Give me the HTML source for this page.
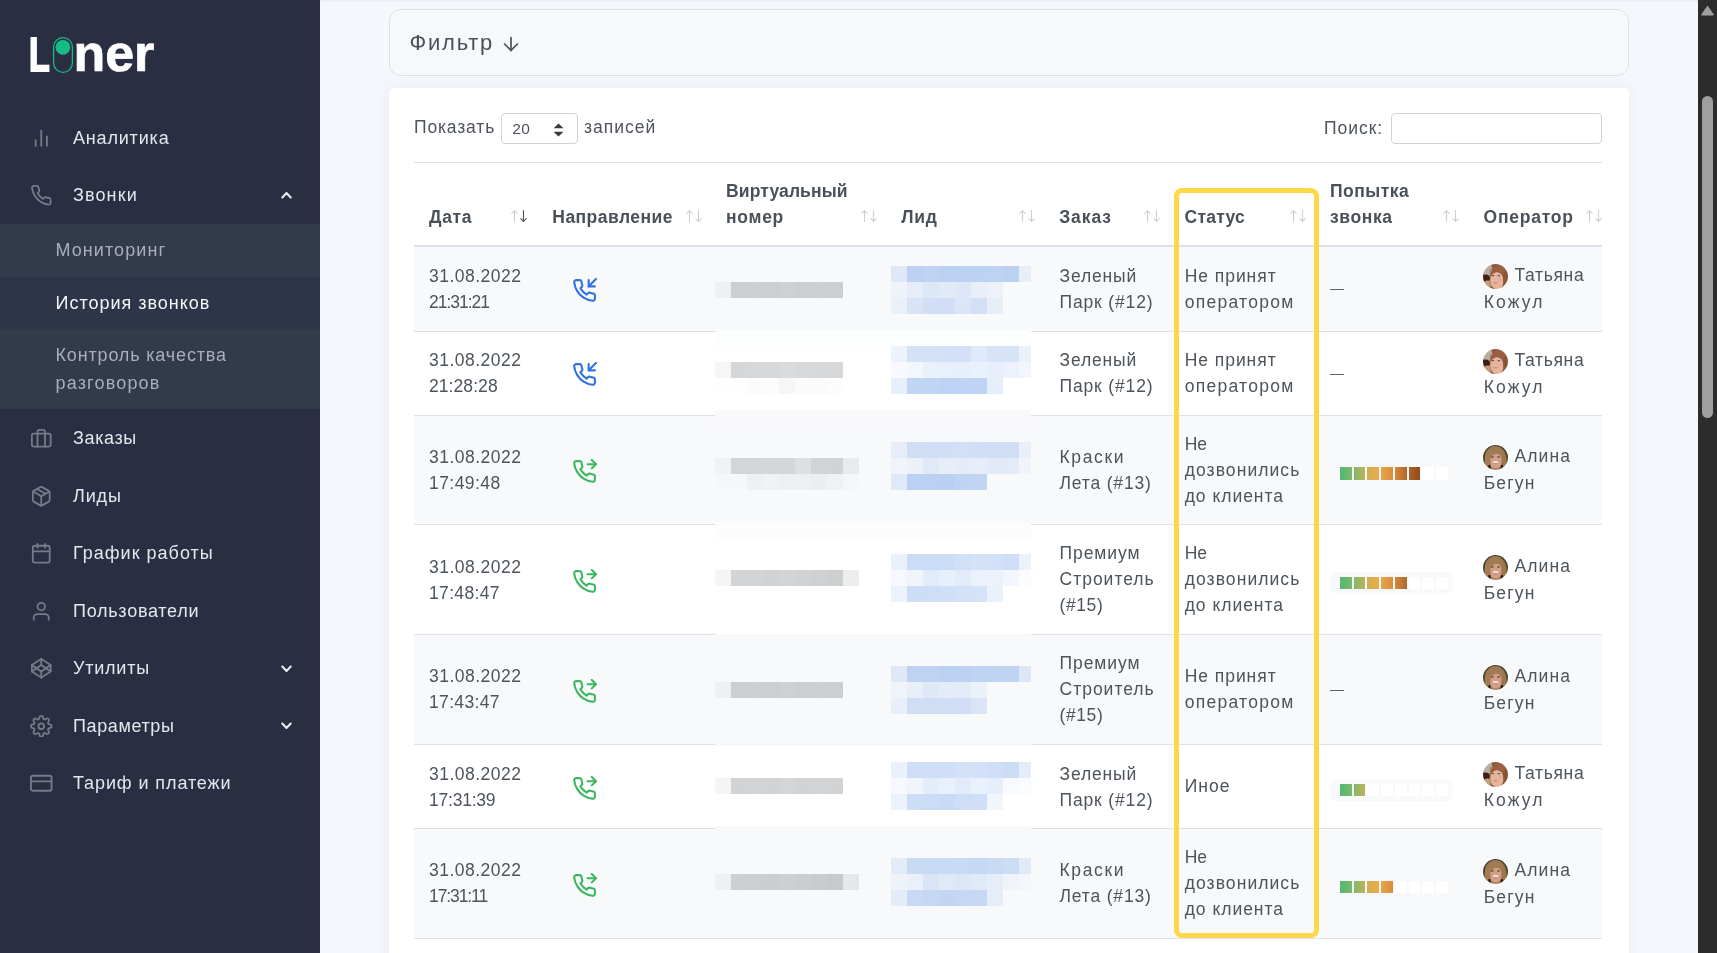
<!DOCTYPE html>
<html lang="ru">
<head>
<meta charset="utf-8">
<title>Liner — История звонков</title>
<style>
*{box-sizing:border-box}
html,body{margin:0;padding:0}
body{width:1717px;height:953px;overflow:hidden;position:relative;background:#f4f7fb;font-family:"Liberation Sans",sans-serif;font-size:17.5px;line-height:26px;color:#4d545b}
.abs{position:absolute}
#sb,#tb,#filter,.ctl,.inp{will-change:transform}
svg.fi{fill:none;stroke:currentColor;stroke-width:2;stroke-linecap:round;stroke-linejoin:round}
/* sidebar */
#sb{position:absolute;left:0;top:0;width:320px;height:953px;background:#2a2e42;color:#e4e7ec}
#sb .it{position:absolute;left:0;width:320px;height:57.5px;font-size:18px;line-height:27px}
#sb .it .tx{position:absolute;left:73px;top:14.8px;white-space:nowrap}
#sb .it svg.fi{position:absolute;left:30px;top:16.8px;width:22.5px;height:22.5px;color:#767b8a;stroke-width:1.9}
#sb .it svg.ch{position:absolute;left:281px;top:24.4px;width:11px;height:8px;fill:none;stroke:#e9ecef;stroke-width:2.1;stroke-linecap:round;stroke-linejoin:round}
#sub{position:absolute;left:0;top:224px;width:320px;height:184.5px;background:#323a4c}
#sub .si{position:absolute;left:0;width:320px;font-size:18px;line-height:27.4px;color:#a9aebb;white-space:nowrap}
#sub .si span.l{position:absolute;left:55.5px}
#sub .act{background:#2e3548;color:#f4f6f8}
/* logo */
#logo{position:absolute;left:0;top:0;width:320px;height:100px;color:#fff;font-weight:bold}
/* main */
#filter{position:absolute;left:389px;top:9px;width:1240px;height:67px;border:1px solid #dde1e7;border-radius:12px;background:#f6f8fb}
#filter .tx{position:absolute;left:19.5px;top:18.8px;font-size:22px;line-height:28px;white-space:nowrap;color:#495057}
#card{position:absolute;left:389px;top:88px;width:1240px;height:900px;background:#fff;border-radius:5px;box-shadow:0 0 16px 0 rgba(33,37,41,.05)}
.ctl{position:absolute;white-space:nowrap;line-height:26px}
.inp{position:absolute;border:1px solid #ced4da;border-radius:4px;background:#fff}
/* table (coordinates are page-absolute inside #tb) */
#tb{position:absolute;left:0;top:0;width:1717px;height:953px;pointer-events:none}
.hl{position:absolute;left:414px;width:1188px;background:#dee2e6}
.row{position:absolute;left:414px;width:1188px}
.row.odd{background:#f8f9fb}
.th{position:absolute;font-weight:bold;white-space:nowrap;line-height:26px;color:#495057}
.sa{position:absolute;top:209px;width:16px;height:14px}
.sa path{fill:none;stroke:#495057;stroke-width:1.1;stroke-linecap:round;stroke-linejoin:round}
.sa .off{opacity:.28}
.c{position:absolute;top:var(--dy,0px);bottom:calc(1px - var(--dy,0px));display:flex;flex-direction:column;justify-content:center;white-space:nowrap;line-height:26px}
.c div{height:26px}
.av{display:inline-block;width:25px;height:25px;border-radius:50%;vertical-align:middle;margin-right:6.6px;overflow:hidden;position:relative;top:.4px;box-shadow:0 0 0 1px #fff}
.av svg{display:block;width:25px;height:25px}
.ph{position:absolute;left:158px;width:25px;height:25px}
.ph.in{color:#2f72e2}
.ph.out{color:#3cb75f}
.dash{position:absolute;left:916px;width:14px;height:1.3px;background:#5b6268}
.bar{position:absolute;left:915.5px;width:123px;height:21.5px;border-radius:7px;background:#f8f9fa}
.bar i{position:absolute;top:4.3px;width:11.8px;height:12.7px;background:#fff}
.bar i.on{background-image:linear-gradient(90deg,#52b871 0px,#7cba6a 13px,#c9b056 26px,#eeaa4b 38px,#d68c3a 54px,#b0632a 68px,#8b4513 82px,#7a3a10 110px);background-size:110px 13px;background-repeat:no-repeat}
#hlbox{position:absolute;left:1174px;top:187.5px;width:145px;height:750px;border:5px solid #ffd84a;border-radius:8px}
#scr{position:absolute;left:1698px;top:0;width:19px;height:953px;background:#2c2c2c}
#scr .th2{position:absolute;left:4px;top:96px;width:11px;height:322px;border-radius:6px;background:#9f9f9f}
#scr svg{position:absolute;left:3px;top:5px;width:13px;height:11px}
#px{position:absolute;left:715px;top:250px;width:316px;height:688px}
</style>
</head>
<body>
<div id="sb">
 <div id="logo">
  <span class="abs" style="left:28.5px;top:26.8px;font-size:48.4px;line-height:54px;transform:scaleX(.7);transform-origin:0 0;-webkit-text-stroke:2px #fff">L</span>
  <svg class="abs" style="left:52px;top:35.5px" width="22" height="38" viewBox="0 0 22 38"><rect x="1.6" y="1.6" width="18.8" height="34.8" rx="9.4" fill="none" stroke="#17b986" stroke-width="1.3"/><circle cx="10.9" cy="11.3" r="7.4" fill="#14bd87"/></svg>
  <span class="abs" style="left:73.6px;top:22.5px;font-size:52px;line-height:60px;letter-spacing:-.2px;-webkit-text-stroke:.7px #fff">ner</span>
 </div>
 <div class="it" style="top:110.2px"><svg class="fi" viewBox="0 0 24 24"><line x1="18" y1="20" x2="18" y2="10"/><line x1="12" y1="20" x2="12" y2="4"/><line x1="6" y1="20" x2="6" y2="14"/></svg><span class="tx"><span style="letter-spacing:0.82px">Аналитика</span></span></div>
 <div class="it" style="top:167.1px"><svg class="fi" viewBox="0 0 24 24"><path d="M22 16.92v3a2 2 0 0 1-2.18 2 19.79 19.79 0 0 1-8.63-3.07 19.5 19.5 0 0 1-6-6 19.79 19.79 0 0 1-3.07-8.67A2 2 0 0 1 4.11 2h3a2 2 0 0 1 2 1.72 12.84 12.84 0 0 0 .7 2.81 2 2 0 0 1-.45 2.11L8.09 9.91a16 16 0 0 0 6 6l1.27-1.27a2 2 0 0 1 2.11-.45 12.84 12.84 0 0 0 2.81.7A2 2 0 0 1 22 16.92z"/></svg><span class="tx"><span style="letter-spacing:1.12px">Звонки</span></span><svg class="ch" viewBox="0 0 11 8"><polyline points="1.3,6.4 5.5,2.1 9.7,6.4"/></svg></div>
 <div id="sub">
  <div class="si" style="top:0;height:52.5px"><span class="l" style="top:12.5px"><span style="letter-spacing:1.07px">Мониторинг</span></span></div>
  <div class="si act" style="top:52.5px;height:52.5px"><span class="l" style="top:13px"><span style="letter-spacing:0.98px">История звонков</span></span></div>
  <div class="si" style="top:105px;height:79.5px"><span class="l" style="top:12.6px"><span style="letter-spacing:0.84px">Контроль качества</span></span><span class="l" style="top:41px"><span style="letter-spacing:1.18px">разговоров</span></span></div>
 </div>
 <div class="it" style="top:410.4px"><svg class="fi" viewBox="0 0 24 24"><rect x="2" y="7" width="20" height="14" rx="2" ry="2"/><path d="M16 21V5a2 2 0 0 0-2-2h-4a2 2 0 0 0-2 2v16"/></svg><span class="tx"><span style="letter-spacing:0.63px">Заказы</span></span></div>
 <div class="it" style="top:467.9px"><svg class="fi" viewBox="0 0 24 24"><line x1="16.5" y1="9.4" x2="7.5" y2="4.21"/><path d="M21 16V8a2 2 0 0 0-1-1.73l-7-4a2 2 0 0 0-2 0l-7 4A2 2 0 0 0 3 8v8a2 2 0 0 0 1 1.73l7 4a2 2 0 0 0 2 0l7-4A2 2 0 0 0 21 16z"/><polyline points="3.27 6.96 12 12.01 20.73 6.96"/><line x1="12" y1="22.08" x2="12" y2="12"/></svg><span class="tx"><span style="letter-spacing:0.86px">Лиды</span></span></div>
 <div class="it" style="top:525.4px"><svg class="fi" viewBox="0 0 24 24"><rect x="3" y="4" width="18" height="18" rx="2" ry="2"/><line x1="16" y1="2" x2="16" y2="6"/><line x1="8" y1="2" x2="8" y2="6"/><line x1="3" y1="10" x2="21" y2="10"/></svg><span class="tx"><span style="letter-spacing:1.01px">График работы</span></span></div>
 <div class="it" style="top:582.9px"><svg class="fi" viewBox="0 0 24 24"><path d="M20 21v-2a4 4 0 0 0-4-4H8a4 4 0 0 0-4 4v2"/><circle cx="12" cy="7" r="4"/></svg><span class="tx"><span style="letter-spacing:0.73px">Пользователи</span></span></div>
 <div class="it" style="top:640.4px"><svg class="fi" viewBox="0 0 24 24"><polygon points="12 2 22 8.5 22 15.5 12 22 2 15.5 2 8.5 12 2"/><line x1="12" y1="22" x2="12" y2="15.5"/><polyline points="22 8.5 12 15.5 2 8.5"/><polyline points="2 15.5 12 8.5 22 15.5"/><line x1="12" y1="2" x2="12" y2="8.5"/></svg><span class="tx"><span style="letter-spacing:0.77px">Утилиты</span></span><svg class="ch" viewBox="0 0 11 8"><polyline points="1.3,1.6 5.5,5.9 9.7,1.6"/></svg></div>
 <div class="it" style="top:697.9px"><svg class="fi" viewBox="0 0 24 24"><circle cx="12" cy="12" r="3"/><path d="M19.4 15a1.65 1.65 0 0 0 .33 1.82l.06.06a2 2 0 0 1 0 2.83 2 2 0 0 1-2.83 0l-.06-.06a1.65 1.65 0 0 0-1.82-.33 1.65 1.65 0 0 0-1 1.51V21a2 2 0 0 1-2 2 2 2 0 0 1-2-2v-.09A1.65 1.65 0 0 0 9 19.4a1.65 1.65 0 0 0-1.82.33l-.06.06a2 2 0 0 1-2.83 0 2 2 0 0 1 0-2.83l.06-.06a1.65 1.65 0 0 0 .33-1.82 1.65 1.65 0 0 0-1.51-1H3a2 2 0 0 1-2-2 2 2 0 0 1 2-2h.09A1.65 1.65 0 0 0 4.6 9a1.65 1.65 0 0 0-.33-1.82l-.06-.06a2 2 0 0 1 0-2.83 2 2 0 0 1 2.83 0l.06.06a1.65 1.65 0 0 0 1.82.33H9a1.65 1.65 0 0 0 1-1.51V3a2 2 0 0 1 2-2 2 2 0 0 1 2 2v.09a1.65 1.65 0 0 0 1 1.51 1.65 1.65 0 0 0 1.82-.33l.06-.06a2 2 0 0 1 2.83 0 2 2 0 0 1 0 2.83l-.06.06a1.65 1.65 0 0 0-.33 1.82V9a1.65 1.65 0 0 0 1.51 1H21a2 2 0 0 1 2 2 2 2 0 0 1-2 2h-.09a1.65 1.65 0 0 0-1.51 1z"/></svg><span class="tx"><span style="letter-spacing:0.61px">Параметры</span></span><svg class="ch" viewBox="0 0 11 8"><polyline points="1.3,1.6 5.5,5.9 9.7,1.6"/></svg></div>
 <div class="it" style="top:755.4px"><svg class="fi" viewBox="0 0 24 24"><rect x="1" y="4" width="22" height="16" rx="2" ry="2"/><line x1="1" y1="10" x2="23" y2="10"/></svg><span class="tx"><span style="letter-spacing:0.9px">Тариф и платежи</span></span></div>
</div>
<svg width="0" height="0" style="position:absolute"><defs><filter id="avb" x="-10%" y="-10%" width="120%" height="120%"><feGaussianBlur stdDeviation=".55"/></filter></defs></svg>
<div class="abs" style="left:320px;top:0;width:1378px;height:3px;background:linear-gradient(#e6e9ee,#f5f7fb)"></div>
<div id="filter"><span class="tx"><span style="letter-spacing:1.76px">Фильтр</span></span><svg class="fi abs" style="left:110px;top:23px;width:22px;height:22px;stroke-width:1.9" viewBox="0 0 24 24"><line x1="12" y1="5" x2="12" y2="19"/><polyline points="19 12 12 19 5 12"/></svg></div>
<div id="card"></div>
<div class="ctl" style="left:414.4px;top:113.8px"><span style="letter-spacing:0.84px">Показать</span></div>
<div class="inp" style="left:501px;top:113px;width:77px;height:30.5px"><span class="abs" style="left:10.2px;top:2.6px;font-size:15.5px;line-height:24px;letter-spacing:.5px">20</span><svg class="abs" style="left:50.7px;top:9.2px" width="11" height="14" viewBox="0 0 11 14"><path d="M.6 5.2 5.5.4l4.9 4.8zM.6 8.8l4.9 4.8 4.9-4.8z" fill="#343a40"/></svg></div>
<div class="ctl" style="left:583.5px;top:113.8px"><span style="letter-spacing:1.0px">записей</span></div>
<div class="ctl" style="left:1324px;top:114.5px"><span style="letter-spacing:0.95px">Поиск:</span></div>
<div class="inp" style="left:1391px;top:113px;width:211px;height:30.5px"></div>
<div id="tb">
<div class="hl" style="top:162px;height:1px"></div>
<div class="th" style="left:429px;top:203.8px"><div><span style="letter-spacing:0.66px">Дата</span></div></div>
<div class="th" style="left:552.3px;top:203.8px"><div><span style="letter-spacing:0.45px">Направление</span></div></div>
<div class="th" style="left:726px;top:177.8px"><div><span style="letter-spacing:0.13px">Виртуальный</span></div><div><span style="letter-spacing:0.72px">номер</span></div></div>
<div class="th" style="left:901.3px;top:203.8px"><div><span style="letter-spacing:0.67px">Лид</span></div></div>
<div class="th" style="left:1059.2px;top:203.8px"><div><span style="letter-spacing:0.92px">Заказ</span></div></div>
<div class="th" style="left:1184.6px;top:203.8px"><div><span style="letter-spacing:0.22px">Статус</span></div></div>
<div class="th" style="left:1330px;top:177.8px"><div><span style="letter-spacing:0.49px">Попытка</span></div><div><span style="letter-spacing:0.6px">звонка</span></div></div>
<div class="th" style="left:1483.5px;top:203.8px"><div><span style="letter-spacing:0.78px">Оператор</span></div></div>
<svg class="sa" style="left:511px" viewBox="0 0 16 14"><path class="off" d="M3.5 12.5V1.5M.8 4.4 3.5 1.5 6.2 4.4"/><path d="M12.5 1.5V12.5M9.8 9.6 12.5 12.5 15.2 9.6"/></svg>
<svg class="sa" style="left:686px" viewBox="0 0 16 14"><path class="off" d="M3.5 12.5V1.5M.8 4.4 3.5 1.5 6.2 4.4"/><path class="off" d="M12.5 1.5V12.5M9.8 9.6 12.5 12.5 15.2 9.6"/></svg>
<svg class="sa" style="left:861px" viewBox="0 0 16 14"><path class="off" d="M3.5 12.5V1.5M.8 4.4 3.5 1.5 6.2 4.4"/><path class="off" d="M12.5 1.5V12.5M9.8 9.6 12.5 12.5 15.2 9.6"/></svg>
<svg class="sa" style="left:1019px" viewBox="0 0 16 14"><path class="off" d="M3.5 12.5V1.5M.8 4.4 3.5 1.5 6.2 4.4"/><path class="off" d="M12.5 1.5V12.5M9.8 9.6 12.5 12.5 15.2 9.6"/></svg>
<svg class="sa" style="left:1144px" viewBox="0 0 16 14"><path class="off" d="M3.5 12.5V1.5M.8 4.4 3.5 1.5 6.2 4.4"/><path class="off" d="M12.5 1.5V12.5M9.8 9.6 12.5 12.5 15.2 9.6"/></svg>
<svg class="sa" style="left:1290px" viewBox="0 0 16 14"><path class="off" d="M3.5 12.5V1.5M.8 4.4 3.5 1.5 6.2 4.4"/><path class="off" d="M12.5 1.5V12.5M9.8 9.6 12.5 12.5 15.2 9.6"/></svg>
<svg class="sa" style="left:1443px" viewBox="0 0 16 14"><path class="off" d="M3.5 12.5V1.5M.8 4.4 3.5 1.5 6.2 4.4"/><path class="off" d="M12.5 1.5V12.5M9.8 9.6 12.5 12.5 15.2 9.6"/></svg>
<svg class="sa" style="left:1586px" viewBox="0 0 16 14"><path class="off" d="M3.5 12.5V1.5M.8 4.4 3.5 1.5 6.2 4.4"/><path class="off" d="M12.5 1.5V12.5M9.8 9.6 12.5 12.5 15.2 9.6"/></svg>
<div class="hl" style="top:245px;height:2px;background:#dcdfe5"></div>
<div class="row odd" style="top:247px;height:85px;border-bottom:1px solid #dee2e6;--dy:0px">
<div class="c" style="left:15px;--dy:0px"><div><span style="letter-spacing:0.49px">31.08.2022</span></div><div><span style="letter-spacing:-1.02px">21:31:21</span></div></div>
<svg class="fi ph in" style="top:30.8px" viewBox="0 0 24 24"><polyline points="16 2 16 8 22 8"/><line x1="23" y1="1" x2="16" y2="8"/><path d="M22 16.92v3a2 2 0 0 1-2.18 2 19.79 19.79 0 0 1-8.63-3.07 19.5 19.5 0 0 1-6-6 19.79 19.79 0 0 1-3.07-8.67A2 2 0 0 1 4.11 2h3a2 2 0 0 1 2 1.72 12.84 12.84 0 0 0 .7 2.81 2 2 0 0 1-.45 2.11L8.09 9.91a16 16 0 0 0 6 6l1.27-1.27a2 2 0 0 1 2.11-.45 12.84 12.84 0 0 0 2.81.7A2 2 0 0 1 22 16.92z"/></svg>
<div class="c" style="left:645.5px"><div><span style="letter-spacing:0.84px">Зеленый</span></div><div><span style="letter-spacing:0.85px">Парк (#12)</span></div></div>
<div class="c" style="left:770.7px;--dy:0px"><div><span style="letter-spacing:0.95px">Не принят</span></div><div><span style="letter-spacing:1.27px">оператором</span></div></div>
<div class="dash" style="top:42.2px"></div>
<div class="c" style="left:1068.8px;--dy:0px"><div style="height:27px"><span class="av"><svg viewBox="0 0 25 25"><g filter="url(#avb)"><rect x="-3" y="-3" width="31" height="31" fill="#8c5838"/><ellipse cx="4.5" cy="6" rx="5" ry="7.5" fill="#b9aea4"/><ellipse cx="2.5" cy="14" rx="4.5" ry="3.6" fill="#3f1f17"/><ellipse cx="4.5" cy="20.5" rx="4.5" ry="4" fill="#c2a07c"/><rect x="6.8" y="5" width="1.6" height="18" fill="#a68462"/><ellipse cx="14" cy="16.6" rx="6.6" ry="8.6" fill="#e6b49c"/><path d="M7 13C7.5 4 14 -.5 19.5 1.5 25 4 26.5 12 24.5 19 23 13 20 9.5 15.5 8.2 11 7.5 9 9.5 7 13z" fill="#98603f"/><ellipse cx="22.8" cy="15" rx="2.6" ry="8" fill="#8a5434"/><ellipse cx="10" cy="11.6" rx="1.4" ry=".65" fill="#5b4648"/><ellipse cx="15.8" cy="11.7" rx="1.4" ry=".65" fill="#56505f"/><ellipse cx="12.4" cy="18.7" rx="2.3" ry=".8" fill="#d98585"/><ellipse cx="17.5" cy="15.5" rx="2" ry="1.6" fill="#e9a99a"/></g></svg></span><span style="letter-spacing:0.66px">Татьяна</span></div><div style="padding-left:.9px"><span style="letter-spacing:2.12px">Кожул</span></div></div>
</div>
<div class="row" style="top:332px;height:84px;border-bottom:1px solid #dee2e6;--dy:0px">
<div class="c" style="left:15px;--dy:0px"><div><span style="letter-spacing:0.49px">31.08.2022</span></div><div><span style="letter-spacing:0.07px">21:28:28</span></div></div>
<svg class="fi ph in" style="top:30.3px" viewBox="0 0 24 24"><polyline points="16 2 16 8 22 8"/><line x1="23" y1="1" x2="16" y2="8"/><path d="M22 16.92v3a2 2 0 0 1-2.18 2 19.79 19.79 0 0 1-8.63-3.07 19.5 19.5 0 0 1-6-6 19.79 19.79 0 0 1-3.07-8.67A2 2 0 0 1 4.11 2h3a2 2 0 0 1 2 1.72 12.84 12.84 0 0 0 .7 2.81 2 2 0 0 1-.45 2.11L8.09 9.91a16 16 0 0 0 6 6l1.27-1.27a2 2 0 0 1 2.11-.45 12.84 12.84 0 0 0 2.81.7A2 2 0 0 1 22 16.92z"/></svg>
<div class="c" style="left:645.5px"><div><span style="letter-spacing:0.84px">Зеленый</span></div><div><span style="letter-spacing:0.85px">Парк (#12)</span></div></div>
<div class="c" style="left:770.7px;--dy:0px"><div><span style="letter-spacing:0.95px">Не принят</span></div><div><span style="letter-spacing:1.27px">оператором</span></div></div>
<div class="dash" style="top:41.7px"></div>
<div class="c" style="left:1068.8px;--dy:0px"><div style="height:27px"><span class="av"><svg viewBox="0 0 25 25"><g filter="url(#avb)"><rect x="-3" y="-3" width="31" height="31" fill="#8c5838"/><ellipse cx="4.5" cy="6" rx="5" ry="7.5" fill="#b9aea4"/><ellipse cx="2.5" cy="14" rx="4.5" ry="3.6" fill="#3f1f17"/><ellipse cx="4.5" cy="20.5" rx="4.5" ry="4" fill="#c2a07c"/><rect x="6.8" y="5" width="1.6" height="18" fill="#a68462"/><ellipse cx="14" cy="16.6" rx="6.6" ry="8.6" fill="#e6b49c"/><path d="M7 13C7.5 4 14 -.5 19.5 1.5 25 4 26.5 12 24.5 19 23 13 20 9.5 15.5 8.2 11 7.5 9 9.5 7 13z" fill="#98603f"/><ellipse cx="22.8" cy="15" rx="2.6" ry="8" fill="#8a5434"/><ellipse cx="10" cy="11.6" rx="1.4" ry=".65" fill="#5b4648"/><ellipse cx="15.8" cy="11.7" rx="1.4" ry=".65" fill="#56505f"/><ellipse cx="12.4" cy="18.7" rx="2.3" ry=".8" fill="#d98585"/><ellipse cx="17.5" cy="15.5" rx="2" ry="1.6" fill="#e9a99a"/></g></svg></span><span style="letter-spacing:0.66px">Татьяна</span></div><div style="padding-left:.9px"><span style="letter-spacing:2.12px">Кожул</span></div></div>
</div>
<div class="row odd" style="top:416px;height:109px;border-bottom:1px solid #dee2e6;--dy:0px">
<div class="c" style="left:15px;--dy:0px"><div><span style="letter-spacing:0.49px">31.08.2022</span></div><div><span style="letter-spacing:0.44px">17:49:48</span></div></div>
<svg class="fi ph out" style="top:42.8px" viewBox="0 0 24 24"><polyline points="19 1 23 5 19 9"/><line x1="15" y1="5" x2="23" y2="5"/><path d="M22 16.92v3a2 2 0 0 1-2.18 2 19.79 19.79 0 0 1-8.63-3.07 19.5 19.5 0 0 1-6-6 19.79 19.79 0 0 1-3.07-8.67A2 2 0 0 1 4.11 2h3a2 2 0 0 1 2 1.72 12.84 12.84 0 0 0 .7 2.81 2 2 0 0 1-.45 2.11L8.09 9.91a16 16 0 0 0 6 6l1.27-1.27a2 2 0 0 1 2.11-.45 12.84 12.84 0 0 0 2.81.7A2 2 0 0 1 22 16.92z"/></svg>
<div class="c" style="left:645.5px"><div><span style="letter-spacing:1.65px">Краски</span></div><div><span style="letter-spacing:0.83px">Лета (#13)</span></div></div>
<div class="c" style="left:770.7px;--dy:0px"><div><span style="letter-spacing:-0.07px">Не</span></div><div><span style="letter-spacing:1.07px">дозвонились</span></div><div><span style="letter-spacing:0.97px">до клиента</span></div></div>
<div class="bar" style="top:46.9px"><i class="on" style="left:10.40px;background-position:-0.00px 0"></i><i class="on" style="left:24.12px;background-position:-13.72px 0"></i><i class="on" style="left:37.84px;background-position:-27.44px 0"></i><i class="on" style="left:51.56px;background-position:-41.16px 0"></i><i class="on" style="left:65.28px;background-position:-54.88px 0"></i><i class="on" style="left:79.00px;background-position:-68.60px 0"></i><i class="" style="left:92.72px;background-position:-82.32px 0"></i><i class="" style="left:106.44px;background-position:-96.04px 0"></i></div>
<div class="c" style="left:1068.8px;--dy:0px"><div style="height:27px"><span class="av"><svg viewBox="0 0 25 25"><g filter="url(#avb)"><rect x="-3" y="-3" width="31" height="31" fill="#45452e"/><ellipse cx="12.3" cy="12.8" rx="10.6" ry="11.8" fill="#9c7852"/><ellipse cx="12.8" cy="15.8" rx="6.3" ry="7.8" fill="#d3a087"/><path d="M4 15C3.5 5 10 1.5 16 3.5 20.5 5.5 20.5 10 19.8 13.5 17.5 9 14.5 8.3 12.3 9 9.5 10 7.5 12 6.5 15.5z" fill="#a07c55"/><ellipse cx="4.6" cy="17" rx="3" ry="7" fill="#a27c56"/><ellipse cx="21" cy="16.5" rx="2.7" ry="8" fill="#9c7650"/><ellipse cx="9.3" cy="11.9" rx="1.6" ry=".75" fill="#5e4436"/><ellipse cx="15.6" cy="11.9" rx="1.6" ry=".75" fill="#5e4436"/><ellipse cx="12.6" cy="17.2" rx="3" ry="1.1" fill="#f0e2d8"/><ellipse cx="12.6" cy="18.8" rx="2.5" ry=".7" fill="#c98c86"/><ellipse cx="6.4" cy="21.8" rx="1.1" ry="2" fill="#1b1411"/><ellipse cx="18.9" cy="21.8" rx="1.1" ry="2" fill="#1b1411"/><ellipse cx="12.5" cy="25" rx="5" ry="2" fill="#b88466"/></g></svg></span><span style="letter-spacing:1.13px">Алина</span></div><div style="padding-left:.9px"><span style="letter-spacing:1.15px">Бегун</span></div></div>
</div>
<div class="row" style="top:525px;height:110px;border-bottom:1px solid #dee2e6;--dy:0px">
<div class="c" style="left:15px;--dy:0.7px"><div><span style="letter-spacing:0.49px">31.08.2022</span></div><div><span style="letter-spacing:0.34px">17:48:47</span></div></div>
<svg class="fi ph out" style="top:44.3px" viewBox="0 0 24 24"><polyline points="19 1 23 5 19 9"/><line x1="15" y1="5" x2="23" y2="5"/><path d="M22 16.92v3a2 2 0 0 1-2.18 2 19.79 19.79 0 0 1-8.63-3.07 19.5 19.5 0 0 1-6-6 19.79 19.79 0 0 1-3.07-8.67A2 2 0 0 1 4.11 2h3a2 2 0 0 1 2 1.72 12.84 12.84 0 0 0 .7 2.81 2 2 0 0 1-.45 2.11L8.09 9.91a16 16 0 0 0 6 6l1.27-1.27a2 2 0 0 1 2.11-.45 12.84 12.84 0 0 0 2.81.7A2 2 0 0 1 22 16.92z"/></svg>
<div class="c" style="left:645.5px"><div><span style="letter-spacing:0.94px">Премиум</span></div><div><span style="letter-spacing:1.0px">Строитель</span></div><div><span style="letter-spacing:0.59px">(#15)</span></div></div>
<div class="c" style="left:770.7px;--dy:0px"><div><span style="letter-spacing:-0.07px">Не</span></div><div><span style="letter-spacing:1.07px">дозвонились</span></div><div><span style="letter-spacing:0.97px">до клиента</span></div></div>
<div class="bar" style="top:47.4px"><i class="on" style="left:10.40px;background-position:-0.00px 0"></i><i class="on" style="left:24.12px;background-position:-13.72px 0"></i><i class="on" style="left:37.84px;background-position:-27.44px 0"></i><i class="on" style="left:51.56px;background-position:-41.16px 0"></i><i class="on" style="left:65.28px;background-position:-54.88px 0"></i><i class="" style="left:79.00px;background-position:-68.60px 0"></i><i class="" style="left:92.72px;background-position:-82.32px 0"></i><i class="" style="left:106.44px;background-position:-96.04px 0"></i></div>
<div class="c" style="left:1068.8px;--dy:0px"><div style="height:27px"><span class="av"><svg viewBox="0 0 25 25"><g filter="url(#avb)"><rect x="-3" y="-3" width="31" height="31" fill="#45452e"/><ellipse cx="12.3" cy="12.8" rx="10.6" ry="11.8" fill="#9c7852"/><ellipse cx="12.8" cy="15.8" rx="6.3" ry="7.8" fill="#d3a087"/><path d="M4 15C3.5 5 10 1.5 16 3.5 20.5 5.5 20.5 10 19.8 13.5 17.5 9 14.5 8.3 12.3 9 9.5 10 7.5 12 6.5 15.5z" fill="#a07c55"/><ellipse cx="4.6" cy="17" rx="3" ry="7" fill="#a27c56"/><ellipse cx="21" cy="16.5" rx="2.7" ry="8" fill="#9c7650"/><ellipse cx="9.3" cy="11.9" rx="1.6" ry=".75" fill="#5e4436"/><ellipse cx="15.6" cy="11.9" rx="1.6" ry=".75" fill="#5e4436"/><ellipse cx="12.6" cy="17.2" rx="3" ry="1.1" fill="#f0e2d8"/><ellipse cx="12.6" cy="18.8" rx="2.5" ry=".7" fill="#c98c86"/><ellipse cx="6.4" cy="21.8" rx="1.1" ry="2" fill="#1b1411"/><ellipse cx="18.9" cy="21.8" rx="1.1" ry="2" fill="#1b1411"/><ellipse cx="12.5" cy="25" rx="5" ry="2" fill="#b88466"/></g></svg></span><span style="letter-spacing:1.13px">Алина</span></div><div style="padding-left:.9px"><span style="letter-spacing:1.15px">Бегун</span></div></div>
</div>
<div class="row odd" style="top:635px;height:110px;border-bottom:1px solid #dee2e6;--dy:0px">
<div class="c" style="left:15px;--dy:0px"><div><span style="letter-spacing:0.49px">31.08.2022</span></div><div><span style="letter-spacing:0.34px">17:43:47</span></div></div>
<svg class="fi ph out" style="top:44.3px" viewBox="0 0 24 24"><polyline points="19 1 23 5 19 9"/><line x1="15" y1="5" x2="23" y2="5"/><path d="M22 16.92v3a2 2 0 0 1-2.18 2 19.79 19.79 0 0 1-8.63-3.07 19.5 19.5 0 0 1-6-6 19.79 19.79 0 0 1-3.07-8.67A2 2 0 0 1 4.11 2h3a2 2 0 0 1 2 1.72 12.84 12.84 0 0 0 .7 2.81 2 2 0 0 1-.45 2.11L8.09 9.91a16 16 0 0 0 6 6l1.27-1.27a2 2 0 0 1 2.11-.45 12.84 12.84 0 0 0 2.81.7A2 2 0 0 1 22 16.92z"/></svg>
<div class="c" style="left:645.5px"><div><span style="letter-spacing:0.94px">Премиум</span></div><div><span style="letter-spacing:1.0px">Строитель</span></div><div><span style="letter-spacing:0.59px">(#15)</span></div></div>
<div class="c" style="left:770.7px;--dy:0px"><div><span style="letter-spacing:0.95px">Не принят</span></div><div><span style="letter-spacing:1.27px">оператором</span></div></div>
<div class="dash" style="top:54.7px"></div>
<div class="c" style="left:1068.8px;--dy:0px"><div style="height:27px"><span class="av"><svg viewBox="0 0 25 25"><g filter="url(#avb)"><rect x="-3" y="-3" width="31" height="31" fill="#45452e"/><ellipse cx="12.3" cy="12.8" rx="10.6" ry="11.8" fill="#9c7852"/><ellipse cx="12.8" cy="15.8" rx="6.3" ry="7.8" fill="#d3a087"/><path d="M4 15C3.5 5 10 1.5 16 3.5 20.5 5.5 20.5 10 19.8 13.5 17.5 9 14.5 8.3 12.3 9 9.5 10 7.5 12 6.5 15.5z" fill="#a07c55"/><ellipse cx="4.6" cy="17" rx="3" ry="7" fill="#a27c56"/><ellipse cx="21" cy="16.5" rx="2.7" ry="8" fill="#9c7650"/><ellipse cx="9.3" cy="11.9" rx="1.6" ry=".75" fill="#5e4436"/><ellipse cx="15.6" cy="11.9" rx="1.6" ry=".75" fill="#5e4436"/><ellipse cx="12.6" cy="17.2" rx="3" ry="1.1" fill="#f0e2d8"/><ellipse cx="12.6" cy="18.8" rx="2.5" ry=".7" fill="#c98c86"/><ellipse cx="6.4" cy="21.8" rx="1.1" ry="2" fill="#1b1411"/><ellipse cx="18.9" cy="21.8" rx="1.1" ry="2" fill="#1b1411"/><ellipse cx="12.5" cy="25" rx="5" ry="2" fill="#b88466"/></g></svg></span><span style="letter-spacing:1.13px">Алина</span></div><div style="padding-left:.9px"><span style="letter-spacing:1.15px">Бегун</span></div></div>
</div>
<div class="row" style="top:745px;height:84px;border-bottom:1px solid #dee2e6;--dy:1.2px">
<div class="c" style="left:15px;--dy:1.2px"><div><span style="letter-spacing:0.49px">31.08.2022</span></div><div><span style="letter-spacing:-0.23px">17:31:39</span></div></div>
<svg class="fi ph out" style="top:31.3px" viewBox="0 0 24 24"><polyline points="19 1 23 5 19 9"/><line x1="15" y1="5" x2="23" y2="5"/><path d="M22 16.92v3a2 2 0 0 1-2.18 2 19.79 19.79 0 0 1-8.63-3.07 19.5 19.5 0 0 1-6-6 19.79 19.79 0 0 1-3.07-8.67A2 2 0 0 1 4.11 2h3a2 2 0 0 1 2 1.72 12.84 12.84 0 0 0 .7 2.81 2 2 0 0 1-.45 2.11L8.09 9.91a16 16 0 0 0 6 6l1.27-1.27a2 2 0 0 1 2.11-.45 12.84 12.84 0 0 0 2.81.7A2 2 0 0 1 22 16.92z"/></svg>
<div class="c" style="left:645.5px"><div><span style="letter-spacing:0.84px">Зеленый</span></div><div><span style="letter-spacing:0.85px">Парк (#12)</span></div></div>
<div class="c" style="left:770.7px;--dy:0px"><div><span style="letter-spacing:0.99px">Иное</span></div></div>
<div class="bar" style="top:34.4px"><i class="on" style="left:10.40px;background-position:-0.00px 0"></i><i class="on" style="left:24.12px;background-position:-13.72px 0"></i><i class="" style="left:37.84px;background-position:-27.44px 0"></i><i class="" style="left:51.56px;background-position:-41.16px 0"></i><i class="" style="left:65.28px;background-position:-54.88px 0"></i><i class="" style="left:79.00px;background-position:-68.60px 0"></i><i class="" style="left:92.72px;background-position:-82.32px 0"></i><i class="" style="left:106.44px;background-position:-96.04px 0"></i></div>
<div class="c" style="left:1068.8px;--dy:0px"><div style="height:27px"><span class="av"><svg viewBox="0 0 25 25"><g filter="url(#avb)"><rect x="-3" y="-3" width="31" height="31" fill="#8c5838"/><ellipse cx="4.5" cy="6" rx="5" ry="7.5" fill="#b9aea4"/><ellipse cx="2.5" cy="14" rx="4.5" ry="3.6" fill="#3f1f17"/><ellipse cx="4.5" cy="20.5" rx="4.5" ry="4" fill="#c2a07c"/><rect x="6.8" y="5" width="1.6" height="18" fill="#a68462"/><ellipse cx="14" cy="16.6" rx="6.6" ry="8.6" fill="#e6b49c"/><path d="M7 13C7.5 4 14 -.5 19.5 1.5 25 4 26.5 12 24.5 19 23 13 20 9.5 15.5 8.2 11 7.5 9 9.5 7 13z" fill="#98603f"/><ellipse cx="22.8" cy="15" rx="2.6" ry="8" fill="#8a5434"/><ellipse cx="10" cy="11.6" rx="1.4" ry=".65" fill="#5b4648"/><ellipse cx="15.8" cy="11.7" rx="1.4" ry=".65" fill="#56505f"/><ellipse cx="12.4" cy="18.7" rx="2.3" ry=".8" fill="#d98585"/><ellipse cx="17.5" cy="15.5" rx="2" ry="1.6" fill="#e9a99a"/></g></svg></span><span style="letter-spacing:0.66px">Татьяна</span></div><div style="padding-left:.9px"><span style="letter-spacing:2.12px">Кожул</span></div></div>
</div>
<div class="row odd" style="top:829px;height:110px;border-bottom:1px solid #dee2e6;--dy:0px">
<div class="c" style="left:15px;--dy:0px"><div><span style="letter-spacing:0.49px">31.08.2022</span></div><div><span style="letter-spacing:-1.1px">17:31:11</span></div></div>
<svg class="fi ph out" style="top:44.3px" viewBox="0 0 24 24"><polyline points="19 1 23 5 19 9"/><line x1="15" y1="5" x2="23" y2="5"/><path d="M22 16.92v3a2 2 0 0 1-2.18 2 19.79 19.79 0 0 1-8.63-3.07 19.5 19.5 0 0 1-6-6 19.79 19.79 0 0 1-3.07-8.67A2 2 0 0 1 4.11 2h3a2 2 0 0 1 2 1.72 12.84 12.84 0 0 0 .7 2.81 2 2 0 0 1-.45 2.11L8.09 9.91a16 16 0 0 0 6 6l1.27-1.27a2 2 0 0 1 2.11-.45 12.84 12.84 0 0 0 2.81.7A2 2 0 0 1 22 16.92z"/></svg>
<div class="c" style="left:645.5px"><div><span style="letter-spacing:1.65px">Краски</span></div><div><span style="letter-spacing:0.83px">Лета (#13)</span></div></div>
<div class="c" style="left:770.7px;--dy:0px"><div><span style="letter-spacing:-0.07px">Не</span></div><div><span style="letter-spacing:1.07px">дозвонились</span></div><div><span style="letter-spacing:0.97px">до клиента</span></div></div>
<div class="bar" style="top:47.4px"><i class="on" style="left:10.40px;background-position:-0.00px 0"></i><i class="on" style="left:24.12px;background-position:-13.72px 0"></i><i class="on" style="left:37.84px;background-position:-27.44px 0"></i><i class="on" style="left:51.56px;background-position:-41.16px 0"></i><i class="" style="left:65.28px;background-position:-54.88px 0"></i><i class="" style="left:79.00px;background-position:-68.60px 0"></i><i class="" style="left:92.72px;background-position:-82.32px 0"></i><i class="" style="left:106.44px;background-position:-96.04px 0"></i></div>
<div class="c" style="left:1068.8px;--dy:0px"><div style="height:27px"><span class="av"><svg viewBox="0 0 25 25"><g filter="url(#avb)"><rect x="-3" y="-3" width="31" height="31" fill="#45452e"/><ellipse cx="12.3" cy="12.8" rx="10.6" ry="11.8" fill="#9c7852"/><ellipse cx="12.8" cy="15.8" rx="6.3" ry="7.8" fill="#d3a087"/><path d="M4 15C3.5 5 10 1.5 16 3.5 20.5 5.5 20.5 10 19.8 13.5 17.5 9 14.5 8.3 12.3 9 9.5 10 7.5 12 6.5 15.5z" fill="#a07c55"/><ellipse cx="4.6" cy="17" rx="3" ry="7" fill="#a27c56"/><ellipse cx="21" cy="16.5" rx="2.7" ry="8" fill="#9c7650"/><ellipse cx="9.3" cy="11.9" rx="1.6" ry=".75" fill="#5e4436"/><ellipse cx="15.6" cy="11.9" rx="1.6" ry=".75" fill="#5e4436"/><ellipse cx="12.6" cy="17.2" rx="3" ry="1.1" fill="#f0e2d8"/><ellipse cx="12.6" cy="18.8" rx="2.5" ry=".7" fill="#c98c86"/><ellipse cx="6.4" cy="21.8" rx="1.1" ry="2" fill="#1b1411"/><ellipse cx="18.9" cy="21.8" rx="1.1" ry="2" fill="#1b1411"/><ellipse cx="12.5" cy="25" rx="5" ry="2" fill="#b88466"/></g></svg></span><span style="letter-spacing:1.13px">Алина</span></div><div style="padding-left:.9px"><span style="letter-spacing:1.15px">Бегун</span></div></div>
</div>
<div id="hlbox"></div>
</div>
<svg id="px" width="316" height="688" viewBox="715 250 316 688" shape-rendering="crispEdges"><rect x="715" y="250" width="316" height="16" fill="#f8f9fb"/><rect x="715" y="266" width="176" height="16" fill="#f8f9fb"/><rect x="891" y="266" width="16" height="16" fill="#dee8f7"/><rect x="907" y="266" width="16" height="16" fill="#bdd2f2"/><rect x="923" y="266" width="16" height="16" fill="#bfd3f2"/><rect x="939" y="266" width="16" height="16" fill="#bbd1f1"/><rect x="955" y="266" width="32" height="16" fill="#bcd2f2"/><rect x="987" y="266" width="16" height="16" fill="#bed3f2"/><rect x="1003" y="266" width="16" height="16" fill="#bbd1f1"/><rect x="1019" y="266" width="12" height="16" fill="#e7eef8"/><rect x="715" y="282" width="16" height="16" fill="#eef0f2"/><rect x="731" y="282" width="16" height="16" fill="#ccced2"/><rect x="747" y="282" width="16" height="16" fill="#cdcfd2"/><rect x="763" y="282" width="16" height="16" fill="#ccced1"/><rect x="779" y="282" width="16" height="16" fill="#ced0d4"/><rect x="795" y="282" width="16" height="16" fill="#cccfd2"/><rect x="811" y="282" width="16" height="16" fill="#cdcfd3"/><rect x="827" y="282" width="16" height="16" fill="#ccced1"/><rect x="843" y="282" width="48" height="16" fill="#f8f9fb"/><rect x="891" y="282" width="16" height="16" fill="#eef2f9"/><rect x="907" y="282" width="16" height="16" fill="#e6edf8"/><rect x="923" y="282" width="16" height="16" fill="#dce7f7"/><rect x="939" y="282" width="16" height="16" fill="#e1eaf7"/><rect x="955" y="282" width="16" height="16" fill="#dde7f7"/><rect x="971" y="282" width="16" height="16" fill="#e9eff9"/><rect x="987" y="282" width="16" height="16" fill="#edf2f9"/><rect x="1003" y="282" width="28" height="16" fill="#f8f9fb"/><rect x="715" y="298" width="176" height="16" fill="#f8f9fb"/><rect x="891" y="298" width="16" height="16" fill="#eaf0f9"/><rect x="907" y="298" width="16" height="16" fill="#d8e4f6"/><rect x="923" y="298" width="16" height="16" fill="#d1dff5"/><rect x="939" y="298" width="16" height="16" fill="#d0dff5"/><rect x="955" y="298" width="16" height="16" fill="#dae6f6"/><rect x="971" y="298" width="16" height="16" fill="#d2e0f5"/><rect x="987" y="298" width="16" height="16" fill="#e8eef8"/><rect x="1003" y="298" width="28" height="16" fill="#f8f9fb"/><rect x="715" y="314" width="316" height="16" fill="#f8f9fb"/><rect x="715" y="330" width="316" height="16" fill="#fcfdfd"/><rect x="715" y="346" width="176" height="16" fill="#ffffff"/><rect x="891" y="346" width="16" height="16" fill="#edf3fc"/><rect x="907" y="346" width="16" height="16" fill="#d4e2f8"/><rect x="923" y="346" width="16" height="16" fill="#d3e2f7"/><rect x="939" y="346" width="16" height="16" fill="#d1e1f7"/><rect x="955" y="346" width="16" height="16" fill="#d2e1f7"/><rect x="971" y="346" width="16" height="16" fill="#dfeafa"/><rect x="987" y="346" width="32" height="16" fill="#d7e4f8"/><rect x="1019" y="346" width="12" height="16" fill="#ebf1fb"/><rect x="715" y="362" width="16" height="16" fill="#f6f6f7"/><rect x="731" y="362" width="16" height="16" fill="#d4d6d7"/><rect x="747" y="362" width="16" height="16" fill="#d5d7d8"/><rect x="763" y="362" width="16" height="16" fill="#d6d8d9"/><rect x="779" y="362" width="16" height="16" fill="#d9dbdc"/><rect x="795" y="362" width="16" height="16" fill="#d7d9da"/><rect x="811" y="362" width="16" height="16" fill="#d6d8da"/><rect x="827" y="362" width="16" height="16" fill="#d5d7d8"/><rect x="843" y="362" width="48" height="16" fill="#ffffff"/><rect x="891" y="362" width="16" height="16" fill="#f7f9fe"/><rect x="907" y="362" width="16" height="16" fill="#f2f6fd"/><rect x="923" y="362" width="16" height="16" fill="#e9f1fb"/><rect x="939" y="362" width="16" height="16" fill="#e8f0fb"/><rect x="955" y="362" width="16" height="16" fill="#e7effb"/><rect x="971" y="362" width="16" height="16" fill="#e9f1fb"/><rect x="987" y="362" width="16" height="16" fill="#e6effb"/><rect x="1003" y="362" width="16" height="16" fill="#ecf2fc"/><rect x="1019" y="362" width="12" height="16" fill="#f3f7fd"/><rect x="715" y="378" width="32" height="16" fill="#fefefe"/><rect x="747" y="378" width="16" height="16" fill="#fafbfb"/><rect x="763" y="378" width="16" height="16" fill="#fcfcfc"/><rect x="779" y="378" width="16" height="16" fill="#f6f6f6"/><rect x="795" y="378" width="16" height="16" fill="#fbfbfb"/><rect x="811" y="378" width="16" height="16" fill="#f9fafa"/><rect x="827" y="378" width="16" height="16" fill="#fcfcfc"/><rect x="843" y="378" width="48" height="16" fill="#ffffff"/><rect x="891" y="378" width="16" height="16" fill="#e6effb"/><rect x="907" y="378" width="32" height="16" fill="#c0d5f4"/><rect x="939" y="378" width="16" height="16" fill="#bcd3f4"/><rect x="955" y="378" width="16" height="16" fill="#bfd4f4"/><rect x="971" y="378" width="16" height="16" fill="#bed4f4"/><rect x="987" y="378" width="16" height="16" fill="#e5eefb"/><rect x="1003" y="378" width="28" height="16" fill="#ffffff"/><rect x="715" y="394" width="316" height="16" fill="#ffffff"/><rect x="715" y="410" width="316" height="16" fill="#f9f9fb"/><rect x="715" y="426" width="316" height="16" fill="#f8f9fb"/><rect x="715" y="442" width="176" height="16" fill="#f8f9fb"/><rect x="891" y="442" width="16" height="16" fill="#e6edf8"/><rect x="907" y="442" width="16" height="16" fill="#cfdef5"/><rect x="923" y="442" width="32" height="16" fill="#d0dff5"/><rect x="955" y="442" width="16" height="16" fill="#d2e0f5"/><rect x="971" y="442" width="16" height="16" fill="#d0dff5"/><rect x="987" y="442" width="16" height="16" fill="#cfdef5"/><rect x="1003" y="442" width="16" height="16" fill="#cedef4"/><rect x="1019" y="442" width="12" height="16" fill="#e9eff9"/><rect x="715" y="458" width="16" height="16" fill="#f0f2f4"/><rect x="731" y="458" width="16" height="16" fill="#d3d5d9"/><rect x="747" y="458" width="16" height="16" fill="#d3d6d9"/><rect x="763" y="458" width="16" height="16" fill="#d4d6d9"/><rect x="779" y="458" width="16" height="16" fill="#d4d7da"/><rect x="795" y="458" width="16" height="16" fill="#dddfe2"/><rect x="811" y="458" width="16" height="16" fill="#d2d4d7"/><rect x="827" y="458" width="16" height="16" fill="#d1d3d7"/><rect x="843" y="458" width="16" height="16" fill="#e9eaed"/><rect x="859" y="458" width="32" height="16" fill="#f8f9fb"/><rect x="891" y="458" width="16" height="16" fill="#f0f4fa"/><rect x="907" y="458" width="16" height="16" fill="#ecf1f9"/><rect x="923" y="458" width="16" height="16" fill="#e0e9f7"/><rect x="939" y="458" width="16" height="16" fill="#e7eef8"/><rect x="955" y="458" width="16" height="16" fill="#e4ecf8"/><rect x="971" y="458" width="16" height="16" fill="#e6edf8"/><rect x="987" y="458" width="16" height="16" fill="#e1eaf7"/><rect x="1003" y="458" width="16" height="16" fill="#e3ebf8"/><rect x="1019" y="458" width="12" height="16" fill="#f0f3fa"/><rect x="715" y="474" width="32" height="16" fill="#f6f7f9"/><rect x="747" y="474" width="16" height="16" fill="#eef0f2"/><rect x="763" y="474" width="16" height="16" fill="#f0f2f4"/><rect x="779" y="474" width="32" height="16" fill="#edeff1"/><rect x="811" y="474" width="16" height="16" fill="#ecedf0"/><rect x="827" y="474" width="16" height="16" fill="#f0f1f4"/><rect x="843" y="474" width="16" height="16" fill="#f5f6f8"/><rect x="859" y="474" width="32" height="16" fill="#f8f9fb"/><rect x="891" y="474" width="16" height="16" fill="#e0e9f7"/><rect x="907" y="474" width="16" height="16" fill="#bbd1f1"/><rect x="923" y="474" width="16" height="16" fill="#bcd1f1"/><rect x="939" y="474" width="16" height="16" fill="#b9d0f1"/><rect x="955" y="474" width="16" height="16" fill="#bfd4f2"/><rect x="971" y="474" width="16" height="16" fill="#c1d5f2"/><rect x="987" y="474" width="44" height="16" fill="#f8f9fb"/><rect x="715" y="490" width="316" height="16" fill="#f8f9fb"/><rect x="715" y="506" width="316" height="16" fill="#f8f9fb"/><rect x="715" y="522" width="316" height="16" fill="#fcfcfd"/><rect x="715" y="538" width="316" height="16" fill="#ffffff"/><rect x="715" y="554" width="176" height="16" fill="#ffffff"/><rect x="891" y="554" width="16" height="16" fill="#eaf1fb"/><rect x="907" y="554" width="16" height="16" fill="#cadcf6"/><rect x="923" y="554" width="16" height="16" fill="#cbdcf6"/><rect x="939" y="554" width="16" height="16" fill="#cadcf6"/><rect x="955" y="554" width="16" height="16" fill="#d0e0f7"/><rect x="971" y="554" width="16" height="16" fill="#d3e2f7"/><rect x="987" y="554" width="16" height="16" fill="#d1e1f7"/><rect x="1003" y="554" width="16" height="16" fill="#cddef6"/><rect x="1019" y="554" width="12" height="16" fill="#ebf2fc"/><rect x="715" y="570" width="16" height="16" fill="#f5f5f6"/><rect x="731" y="570" width="16" height="16" fill="#d2d4d6"/><rect x="747" y="570" width="16" height="16" fill="#d2d4d5"/><rect x="763" y="570" width="16" height="16" fill="#d0d2d3"/><rect x="779" y="570" width="16" height="16" fill="#d2d4d6"/><rect x="795" y="570" width="16" height="16" fill="#d0d2d4"/><rect x="811" y="570" width="16" height="16" fill="#cfd0d2"/><rect x="827" y="570" width="16" height="16" fill="#ccced0"/><rect x="843" y="570" width="16" height="16" fill="#eceded"/><rect x="859" y="570" width="32" height="16" fill="#ffffff"/><rect x="891" y="570" width="16" height="16" fill="#f5f8fd"/><rect x="907" y="570" width="16" height="16" fill="#f0f5fc"/><rect x="923" y="570" width="16" height="16" fill="#e1ebfa"/><rect x="939" y="570" width="16" height="16" fill="#e6effb"/><rect x="955" y="570" width="16" height="16" fill="#e1ebfa"/><rect x="971" y="570" width="32" height="16" fill="#ebf2fc"/><rect x="1003" y="570" width="16" height="16" fill="#f2f6fd"/><rect x="1019" y="570" width="12" height="16" fill="#fafcfe"/><rect x="715" y="586" width="176" height="16" fill="#ffffff"/><rect x="891" y="586" width="16" height="16" fill="#ebf2fc"/><rect x="907" y="586" width="16" height="16" fill="#ccddf6"/><rect x="923" y="586" width="16" height="16" fill="#cddef6"/><rect x="939" y="586" width="16" height="16" fill="#cfdff7"/><rect x="955" y="586" width="16" height="16" fill="#d4e2f8"/><rect x="971" y="586" width="16" height="16" fill="#d5e3f8"/><rect x="987" y="586" width="16" height="16" fill="#e9f1fb"/><rect x="1003" y="586" width="28" height="16" fill="#ffffff"/><rect x="715" y="602" width="316" height="16" fill="#ffffff"/><rect x="715" y="618" width="316" height="16" fill="#ffffff"/><rect x="715" y="634" width="316" height="16" fill="#f6f8fa"/><rect x="715" y="650" width="316" height="16" fill="#f8f9fb"/><rect x="715" y="666" width="176" height="16" fill="#f8f9fb"/><rect x="891" y="666" width="16" height="16" fill="#dee8f7"/><rect x="907" y="666" width="32" height="16" fill="#bed3f2"/><rect x="939" y="666" width="16" height="16" fill="#bbd1f1"/><rect x="955" y="666" width="16" height="16" fill="#bdd2f2"/><rect x="971" y="666" width="16" height="16" fill="#bfd4f2"/><rect x="987" y="666" width="16" height="16" fill="#c0d4f2"/><rect x="1003" y="666" width="16" height="16" fill="#bfd3f2"/><rect x="1019" y="666" width="12" height="16" fill="#dce6f6"/><rect x="715" y="682" width="16" height="16" fill="#eef0f2"/><rect x="731" y="682" width="16" height="16" fill="#ccced2"/><rect x="747" y="682" width="16" height="16" fill="#cdcfd2"/><rect x="763" y="682" width="16" height="16" fill="#ccced1"/><rect x="779" y="682" width="16" height="16" fill="#ced0d4"/><rect x="795" y="682" width="16" height="16" fill="#cccfd2"/><rect x="811" y="682" width="16" height="16" fill="#cdcfd3"/><rect x="827" y="682" width="16" height="16" fill="#ccced1"/><rect x="843" y="682" width="48" height="16" fill="#f8f9fb"/><rect x="891" y="682" width="16" height="16" fill="#eff3fa"/><rect x="907" y="682" width="16" height="16" fill="#e9eff9"/><rect x="923" y="682" width="16" height="16" fill="#dfe8f7"/><rect x="939" y="682" width="16" height="16" fill="#e5ecf8"/><rect x="955" y="682" width="16" height="16" fill="#e2ebf8"/><rect x="971" y="682" width="16" height="16" fill="#ebf1f9"/><rect x="987" y="682" width="32" height="16" fill="#f7f9fb"/><rect x="1019" y="682" width="12" height="16" fill="#f8f9fb"/><rect x="715" y="698" width="176" height="16" fill="#f8f9fb"/><rect x="891" y="698" width="16" height="16" fill="#e9eff9"/><rect x="907" y="698" width="32" height="16" fill="#cfdef4"/><rect x="939" y="698" width="16" height="16" fill="#cedef4"/><rect x="955" y="698" width="16" height="16" fill="#d0dff5"/><rect x="971" y="698" width="16" height="16" fill="#d9e5f6"/><rect x="987" y="698" width="44" height="16" fill="#f8f9fb"/><rect x="715" y="714" width="316" height="16" fill="#f8f9fb"/><rect x="715" y="730" width="316" height="16" fill="#f7f8fa"/><rect x="715" y="746" width="316" height="16" fill="#ffffff"/><rect x="715" y="762" width="176" height="16" fill="#ffffff"/><rect x="891" y="762" width="16" height="16" fill="#eaf1fb"/><rect x="907" y="762" width="16" height="16" fill="#cddef6"/><rect x="923" y="762" width="16" height="16" fill="#cedef7"/><rect x="939" y="762" width="16" height="16" fill="#cedff7"/><rect x="955" y="762" width="16" height="16" fill="#d3e2f7"/><rect x="971" y="762" width="16" height="16" fill="#d2e1f7"/><rect x="987" y="762" width="16" height="16" fill="#cfdff7"/><rect x="1003" y="762" width="16" height="16" fill="#cbddf6"/><rect x="1019" y="762" width="12" height="16" fill="#e3edfa"/><rect x="715" y="778" width="16" height="16" fill="#f5f5f6"/><rect x="731" y="778" width="16" height="16" fill="#d1d3d5"/><rect x="747" y="778" width="16" height="16" fill="#d2d4d5"/><rect x="763" y="778" width="16" height="16" fill="#d1d3d4"/><rect x="779" y="778" width="16" height="16" fill="#d3d5d7"/><rect x="795" y="778" width="16" height="16" fill="#d1d3d5"/><rect x="811" y="778" width="16" height="16" fill="#d2d4d5"/><rect x="827" y="778" width="16" height="16" fill="#d1d3d4"/><rect x="843" y="778" width="48" height="16" fill="#ffffff"/><rect x="891" y="778" width="16" height="16" fill="#f5f8fd"/><rect x="907" y="778" width="16" height="16" fill="#f0f5fc"/><rect x="923" y="778" width="16" height="16" fill="#e2ecfa"/><rect x="939" y="778" width="16" height="16" fill="#e8f0fb"/><rect x="955" y="778" width="16" height="16" fill="#e1ebfa"/><rect x="971" y="778" width="16" height="16" fill="#e9f1fb"/><rect x="987" y="778" width="16" height="16" fill="#e6eefb"/><rect x="1003" y="778" width="16" height="16" fill="#f8fafe"/><rect x="1019" y="778" width="12" height="16" fill="#fbfcfe"/><rect x="715" y="794" width="176" height="16" fill="#ffffff"/><rect x="891" y="794" width="16" height="16" fill="#ebf2fc"/><rect x="907" y="794" width="16" height="16" fill="#ccddf6"/><rect x="923" y="794" width="16" height="16" fill="#cadcf6"/><rect x="939" y="794" width="16" height="16" fill="#c8dbf6"/><rect x="955" y="794" width="16" height="16" fill="#cddef6"/><rect x="971" y="794" width="16" height="16" fill="#cfdff7"/><rect x="987" y="794" width="16" height="16" fill="#f1f6fd"/><rect x="1003" y="794" width="28" height="16" fill="#ffffff"/><rect x="715" y="810" width="316" height="16" fill="#ffffff"/><rect x="715" y="826" width="316" height="16" fill="#f7f8fa"/><rect x="715" y="842" width="316" height="16" fill="#f8f9fb"/><rect x="715" y="858" width="176" height="16" fill="#f8f9fb"/><rect x="891" y="858" width="16" height="16" fill="#e3ebf8"/><rect x="907" y="858" width="16" height="16" fill="#c9daf3"/><rect x="923" y="858" width="32" height="16" fill="#c9daf4"/><rect x="955" y="858" width="16" height="16" fill="#c8daf3"/><rect x="971" y="858" width="16" height="16" fill="#c6d8f3"/><rect x="987" y="858" width="16" height="16" fill="#c9daf4"/><rect x="1003" y="858" width="16" height="16" fill="#ccdcf4"/><rect x="1019" y="858" width="12" height="16" fill="#e1eaf7"/><rect x="715" y="874" width="16" height="16" fill="#eef0f2"/><rect x="731" y="874" width="16" height="16" fill="#cdd0d3"/><rect x="747" y="874" width="16" height="16" fill="#cccfd2"/><rect x="763" y="874" width="16" height="16" fill="#cbcdd0"/><rect x="779" y="874" width="16" height="16" fill="#cdcfd3"/><rect x="795" y="874" width="16" height="16" fill="#cbced1"/><rect x="811" y="874" width="16" height="16" fill="#c9cccf"/><rect x="827" y="874" width="16" height="16" fill="#c7c9cd"/><rect x="843" y="874" width="16" height="16" fill="#e6e7ea"/><rect x="859" y="874" width="32" height="16" fill="#f8f9fb"/><rect x="891" y="874" width="16" height="16" fill="#eef3f9"/><rect x="907" y="874" width="16" height="16" fill="#eaf0f9"/><rect x="923" y="874" width="16" height="16" fill="#d9e4f6"/><rect x="939" y="874" width="16" height="16" fill="#e0eaf7"/><rect x="955" y="874" width="16" height="16" fill="#dce6f7"/><rect x="971" y="874" width="16" height="16" fill="#dfe9f7"/><rect x="987" y="874" width="16" height="16" fill="#e6edf8"/><rect x="1003" y="874" width="16" height="16" fill="#f0f3fa"/><rect x="1019" y="874" width="12" height="16" fill="#f3f6fa"/><rect x="715" y="890" width="176" height="16" fill="#f8f9fb"/><rect x="891" y="890" width="16" height="16" fill="#e4ecf8"/><rect x="907" y="890" width="16" height="16" fill="#c7d9f3"/><rect x="923" y="890" width="16" height="16" fill="#c5d8f3"/><rect x="939" y="890" width="16" height="16" fill="#c2d6f2"/><rect x="955" y="890" width="16" height="16" fill="#c5d7f3"/><rect x="971" y="890" width="16" height="16" fill="#c6d8f3"/><rect x="987" y="890" width="16" height="16" fill="#e6edf8"/><rect x="1003" y="890" width="28" height="16" fill="#f8f9fb"/><rect x="715" y="906" width="316" height="16" fill="#f8f9fb"/><rect x="715" y="922" width="316" height="16" fill="#f8f9fb"/></svg>
<div id="scr"><svg viewBox="0 0 13 11"><path d="M6.5.6 12.6 9.2a.9.9 0 0 1-.7 1.3H1.1a.9.9 0 0 1-.7-1.3z" fill="#9f9f9f"/></svg><div class="th2"></div></div>
</body>
</html>
